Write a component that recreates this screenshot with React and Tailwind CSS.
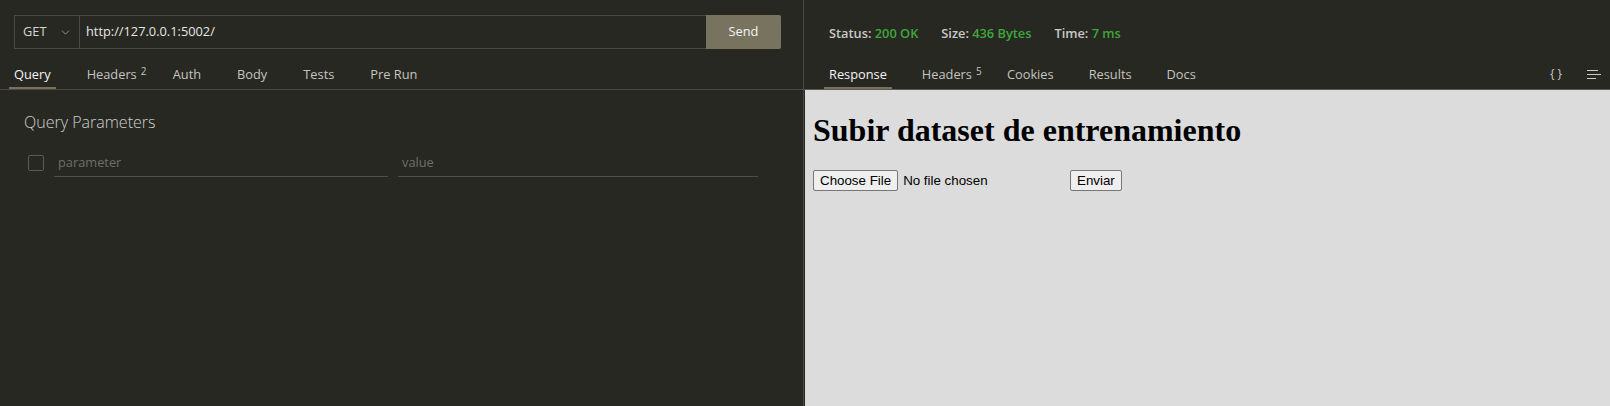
import React from "react";
import { ChevronDown } from "lucide-react";

function Tab({ label, sup, active }) {
  return (
    <div
      className={
        "relative flex h-[40px] items-center px-[5px] pt-[12px] border-b-2 " +
        (active ? "border-[#77725e] text-[#f4f4f4]" : "border-transparent text-[#c4c4bf]")
      }
    >
      <span className="leading-[18px]">{label}</span>
      {sup && (
        <span className="absolute left-full top-[16px] -ml-[1px] text-[10px] leading-[12px] text-[#c4c4bf]">
          {sup}
        </span>
      )}
    </div>
  );
}

export default function App() {
  return (
    <div className="flex h-[406px] w-[1610px] overflow-hidden bg-[#282823] font-['Open_Sans','Noto_Sans',sans-serif] text-[12.8px]">
      {/* Left panel */}
      <div className="flex w-[803px] flex-col">
        <div className="pl-[14px] pr-[22px] pt-[15px]">
          <div className="flex h-[34px]">
            <div className="flex w-[66px] items-center justify-between border border-[#4a4a44] pl-[8px] pr-[7px] text-[#d6d6d2]">
              <span>GET</span>
              <ChevronDown size={13} strokeWidth={1.5} className="text-[#a9a9a4]" />
            </div>
            <div className="flex flex-1 items-center border-y border-[#4a4a44] pl-[6px] text-[#e6e6e2]">
              http://127.0.0.1:5002/
            </div>
            <div className="flex w-[75px] items-center justify-center rounded-r-[2px] bg-[#78735f] text-[#f4f4f4]">
              Send
            </div>
          </div>
        </div>
        <div className="flex gap-[26px] border-b border-[#4a4a44] pl-[9px]">
          <Tab label="Query" active />
          <Tab label="Headers" sup="2" />
          <Tab label="Auth" />
          <Tab label="Body" />
          <Tab label="Tests" />
          <Tab label="Pre Run" />
        </div>
        <div className="px-[24px] pt-[21px]">
          <div className="text-[16px] font-light leading-[22px] text-[#cfcfcb]">Query Parameters</div>
          <div className="mt-[16px] flex h-[28px] items-center">
            <div className="ml-[4px] h-[16px] w-[16px] rounded-[2px] border border-[#5b5b56]" />
            <div className="ml-[10px] flex h-[28px] w-[334px] items-center border-b border-[#4f4f4a] pl-[4px] text-[#6e6e69]">
              parameter
            </div>
            <div className="ml-[10px] flex h-[28px] w-[360px] items-center border-b border-[#4f4f4a] pl-[4px] text-[#6e6e69]">
              value
            </div>
          </div>
        </div>
      </div>

      {/* Divider */}
      <div className="w-px bg-[#4a4a44]" />

      {/* Right panel */}
      <div className="flex flex-1 flex-col">
        <div className="flex h-[49px] gap-[23px] pl-[25px] pt-[24px] font-semibold leading-[18px]">
          <div>
            <span className="text-[#c9c9c5]">Status: </span>
            <span className="text-[#3ea63c]">200 OK</span>
          </div>
          <div>
            <span className="text-[#c9c9c5]">Size: </span>
            <span className="text-[#3ea63c]">436 Bytes</span>
          </div>
          <div>
            <span className="text-[#c9c9c5]">Time: </span>
            <span className="text-[#3ea63c]">7 ms</span>
          </div>
        </div>
        <div className="flex items-stretch border-b border-[#5c5c57] pl-[20px]">
          <div className="flex gap-[25px]">
            <Tab label="Response" active />
            <Tab label="Headers" sup="5" />
            <Tab label="Cookies" />
            <Tab label="Results" />
            <Tab label="Docs" />
          </div>
          <div className="ml-auto flex items-center gap-[25px] pr-[9px] pt-[10px]">
            <span className="text-[12px] text-[#c9c9c5]">{"{ }"}</span>
            <div className="flex w-[14px] flex-col gap-[3px]">
              <div className="h-px w-[11px] bg-[#c9c9c5]" />
              <div className="h-px w-[14px] bg-[#c9c9c5]" />
              <div className="h-px w-[9px] bg-[#c9c9c5]" />
            </div>
          </div>
        </div>
        <div className="ml-px flex-1 bg-[#dcdcdc] px-[8px] pt-[22px] text-black">
          <h1 className="mb-[21px] font-['Liberation_Serif',serif] text-[32px] font-bold leading-[normal]">
            Subir dataset de entrenamiento
          </h1>
          <div className="flex items-center font-['Liberation_Sans',Arial,sans-serif] text-[13.33px]">
            <div className="flex w-[253px] items-center">
              <div className="flex h-[21px] items-center rounded-[2px] border border-[#767676] bg-[#efefef] px-[6px]">
                Choose File
              </div>
              <span className="ml-[5px]">No file chosen</span>
            </div>
            <div className="ml-[4px] flex h-[21px] items-center rounded-[2px] border border-[#767676] bg-[#efefef] px-[6px]">
              Enviar
            </div>
          </div>
        </div>
      </div>
    </div>
  );
}
